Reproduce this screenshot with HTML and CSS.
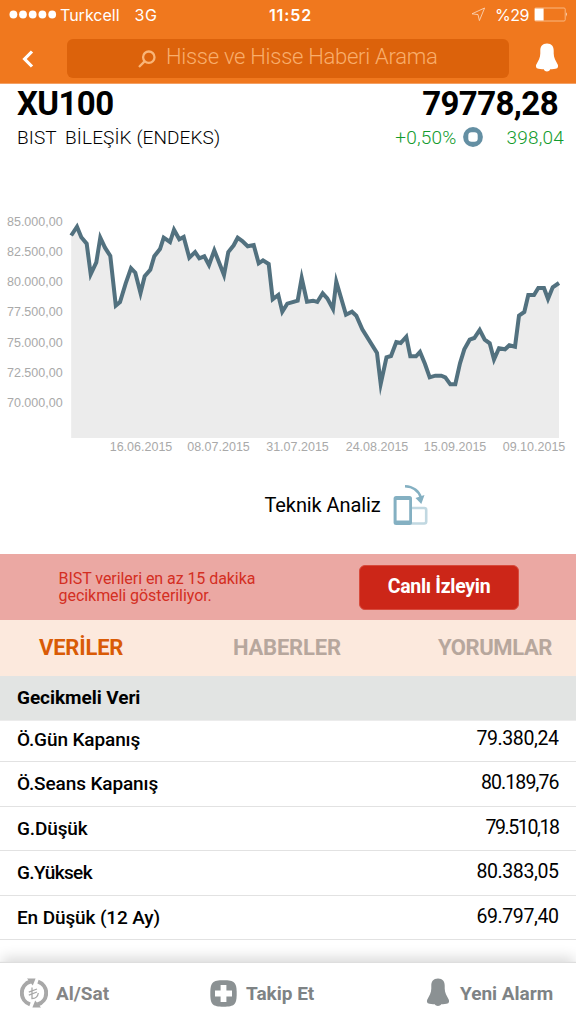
FILE: index.html
```html
<!DOCTYPE html>
<html lang="tr">
<head>
  <meta charset="UTF-8">
  <meta name="viewport" content="width=device-width, initial-scale=1.0">
  <title>XU100 - BIST Bileşik</title>
  <link rel="stylesheet" href="styles.css">
</head>
<body>
  <header class="top">
    <div class="status-bar">
      <div class="status-left">
        <svg width="48" height="9" viewBox="0 0 48 9" fill="#fff">
          <circle cx="4.4" cy="4.5" r="3.9"/><circle cx="14" cy="4.5" r="3.9"/><circle cx="23.7" cy="4.5" r="3.9"/><circle cx="33.4" cy="4.5" r="3.9"/><circle cx="43.2" cy="4.5" r="3.9"/>
        </svg>
        <span class="carrier">Turkcell</span>
        <span class="network">3G</span>
      </div>
      <span class="clock">11:52</span>
      <div class="status-right">
        <svg width="15" height="15" viewBox="0 0 15 15" fill="none" stroke="#fbd3b3" stroke-width="0.9">
          <path d="M13.6 1 L1 6.8 L7 7.6 L8.4 13.6 Z"/>
        </svg>
        <span class="percent">%29</span>
        <svg width="34" height="15" viewBox="0 0 34 15">
          <rect x="0.6" y="1" width="30.6" height="13" rx="1.2" fill="none" stroke="#f9b780"/>
          <rect x="1" y="1.5" width="8.6" height="12" fill="#fff"/>
          <path d="M32 5.3 Q33.8 7.5 32 9.7 Z" fill="#fff"/>
        </svg>
      </div>
    </div>
    <div class="nav">
      <svg class="back" width="12" height="18" viewBox="0 0 12 18" fill="none" stroke="#fff" stroke-width="3.2">
        <path d="M10 1.5 L2.6 9 L10 16.5"/>
      </svg>
      <div class="search">
        <svg width="18" height="18" viewBox="0 0 18 18" fill="none" stroke="#f9b578" stroke-width="2.3">
          <circle cx="10.8" cy="7.2" r="5.7"/>
          <path d="M6.6 11.4 L1 17"/>
        </svg>
        <span>Hisse ve Hisse Haberi Arama</span>
      </div>
      <svg class="bell" width="24" height="29" viewBox="0 0 24 29" fill="#fff">
        <path d="M12 0.5 C7.3 0.5 5.3 3.6 5.3 7.4 L5.3 10.5 C5.3 15 3.3 17.5 1.3 21.5 C0.6 23 1 24.6 1.8 25.2 C4 26 6.5 26.2 8.8 26.3 C9.8 29.2 14.2 29.2 15.2 26.3 C17.5 26.2 20 26 22.2 25.2 C23 24.6 23.4 23 22.7 21.5 C20.7 17.5 18.7 15 18.7 10.5 L18.7 7.4 C18.7 3.6 16.7 0.5 12 0.5 Z"/>
      </svg>
    </div>
  </header>

  <section class="quote">
    <div class="quote-main">
      <h1>XU100</h1>
      <span class="price">79778,28</span>
    </div>
    <div class="quote-sub">
      <span class="index-name"><span>BIST</span> <span>BİLEŞİK (ENDEKS)</span></span>
      <div class="change">
        <span>+0,50%</span>
        <svg width="20" height="20" viewBox="0 0 20 20">
          <circle cx="10" cy="10" r="9.9" fill="#648fa3"/>
          <rect x="5.3" y="5.3" width="9.4" height="9.4" rx="3.2" fill="#fff"/>
        </svg>
        <span class="diff">398,04</span>
      </div>
    </div>
  </section>

  <svg class="chart" width="576" height="255" viewBox="0 205 576 255">
    <path class="area" d="M71.2 438 V235 L77 226.7 81.3 237.3 86.7 243.7 90.7 274.3 96.3 262.3 100.3 237.7 105 247.7 110.3 256 115.3 306.5 120 302 125.7 283.3 131 268.3 135.3 272.7 140.5 293 144.7 276.3 150.3 269.7 154.3 256.3 160 249 163.7 237.7 170 242 174 229.7 179.3 239.3 183.7 237 189.3 257.7 195.1 252 199.3 258.3 204.3 256.3 209 265 214.3 250.3 224 275 228.3 252 233.7 245.3 237.7 237.7 242.3 241 247.7 246.3 253.7 245 258.7 263.3 263 260.3 268.7 264 272.7 299.3 278.3 295 282.3 311.7 287.3 303.7 297.7 300.7 301.7 278 307 301.7 313 300.7 317.3 302 322.7 293.3 327.3 298.3 333 309 336.3 281.7 346 314.7 352 311.7 356.3 315.7 362.3 329.3 377 353 380.7 386 386.5 357.3 391 356 396.3 342 400.7 343 406.3 336.7 410.3 356.3 416 356.3 420 352 425 364 429.7 377.3 435.3 375.7 441.3 375.7 445.3 377.3 450.3 384.3 455.3 384.3 460 363.3 464.3 349.3 469.7 339.7 474.3 338 479.7 330 484.7 339.7 489.7 343.3 494 361 499 348.3 505 349.3 509.3 345.3 515 346.7 519 315.7 524.3 312 528.3 295 534 295 538.3 288 544 288 548 299 552.7 287.3 559 283 V438 Z"/>
    <polyline class="line" points="71.2,235.5 77,226.7 81.3,237.3 86.7,243.7 90.7,274.3 96.3,262.3 100.3,237.7 105,247.7 110.3,256 115.8,305.5 120,302 125.7,283.3 131,268.3 135.3,272.7 140.5,293 144.7,276.3 150.3,269.7 154.3,256.3 160,249 163.7,237.7 170,242 174,229.7 179.3,239.3 183.7,237 189.3,257.7 195.1,252 199.3,258.3 204.3,256.3 209,265 214.3,250.3 224,275 228.3,252 233.7,245.3 237.7,237.7 242.3,241 247.7,246.3 253.7,245 258.7,263.3 263,260.3 268.7,264 272.7,299.3 278.3,295 282.3,311.7 287.3,303.7 297.7,300.7 301.7,278 307,301.7 313,300.7 317.3,302 322.7,293.3 327.3,298.3 333,309 336.3,281.7 346,314.7 352,311.7 356.3,315.7 362.3,329.3 377,353 380.7,384 386.5,357.3 391,356 396.3,342 400.7,343 406.3,336.7 410.3,356.3 416,356.3 420,352 425,364 429.7,377.3 435.3,375.7 441.3,375.7 445.3,377.3 450.3,384.3 455.3,384.3 460,363.3 464.3,349.3 469.7,339.7 474.3,338 479.7,330 484.7,339.7 489.7,343.3 494,359.5 499,348.3 505,349.3 509.3,345.3 515,346.7 519,315.7 524.3,312 528.3,295 534,295 538.3,288 544,288 548,299 552.7,287.3 559,283"/>
    <g class="axis axis-y">
      <text x="62.6" y="225.7">85.000,00</text>
      <text x="62.6" y="255.9">82.500,00</text>
      <text x="62.6" y="286.2">80.000,00</text>
      <text x="62.6" y="316.4">77.500,00</text>
      <text x="62.6" y="346.6">75.000,00</text>
      <text x="62.6" y="376.7">72.500,00</text>
      <text x="62.6" y="406.9">70.000,00</text>
    </g>
    <g class="axis axis-x">
      <text x="141" y="451.4">16.06.2015</text>
      <text x="218.5" y="451.4">08.07.2015</text>
      <text x="297.5" y="451.4">31.07.2015</text>
      <text x="377" y="451.4">24.08.2015</text>
      <text x="455" y="451.4">15.09.2015</text>
      <text x="534" y="451.4">09.10.2015</text>
    </g>
  </svg>

  <div class="analysis">
    <span>Teknik Analiz</span>
    <svg width="36" height="42" viewBox="0 0 36 42">
      <rect x="17" y="24" width="16.2" height="15.5" rx="2" fill="none" stroke="#c1d8e1" stroke-width="2.6"/>
      <rect x="0.6" y="12" width="18.4" height="29" rx="2.5" fill="#84b0c2"/>
      <rect x="3.6" y="16" width="12.6" height="20.5" fill="#fff"/>
      <path d="M12 2.2 C20 2.5 26 7 28 14" fill="none" stroke="#84b0c2" stroke-width="2.6"/>
      <path d="M22.5 14 L31.5 11 L28.3 20 Z" fill="#84b0c2"/>
    </svg>
  </div>

  <div class="notice">
    <p>BIST verileri en az 15 dakika<br>gecikmeli gösteriliyor.</p>
    <button class="live-btn">Canlı İzleyin</button>
  </div>

  <nav class="tabs">
    <span class="tab active">VERİLER</span>
    <span class="tab tab-news">HABERLER</span>
    <span class="tab tab-comments">YORUMLAR</span>
  </nav>

  <h2 class="section-title">Gecikmeli Veri</h2>
  <ul class="data">
    <li><span class="label">Ö.Gün Kapanış</span><span class="value">79.380,24</span></li>
    <li><span class="label">Ö.Seans Kapanış</span><span class="value ones">80.189,76</span></li>
    <li><span class="label">G.Düşük</span><span class="value more-ones">79.510,18</span></li>
    <li><span class="label tight">G.Yüksek</span><span class="value">80.383,05</span></li>
    <li><span class="label">En Düşük (12 Ay)</span><span class="value">69.797,40</span></li>
  </ul>

  <footer class="bottom-bar">
    <div class="action trade">
      <svg width="28" height="30" viewBox="0 0 28 30">
        <path d="M10 26.4 A12 12 0 0 1 10.5 3.5" fill="none" stroke="#a8a8a8" stroke-width="4"/>
        <path d="M18 3.6 A12 12 0 0 1 17.5 26.5" fill="none" stroke="#a8a8a8" stroke-width="4"/>
        <path d="M7 0.4 L15.6 0.6 L12.8 7.5 Z M21 29.6 L12.4 29.4 L15.2 22.5 Z" fill="#a8a8a8"/>
        <path d="M12 9.5 V20.5 Q17.6 20.5 18.3 15 M8.8 14.2 L17 11 M8.8 17.2 L17 14" fill="none" stroke="#a8a8a8" stroke-width="1.3"/>
      </svg>
      <span>Al/Sat</span>
    </div>
    <div class="action follow">
      <svg width="27" height="27" viewBox="0 0 27 27">
        <path d="M13.5 0.3 C24.5 0.3 26.7 2.5 26.7 13.5 S24.5 26.7 13.5 26.7 S0.3 24.5 0.3 13.5 S2.5 0.3 13.5 0.3 Z" fill="#8b9193"/>
        <path d="M10.6 5 H16.4 V10.6 H22 V16.4 H16.4 V22 H10.6 V16.4 H5 V10.6 H10.6 Z" fill="#fff"/>
      </svg>
      <span>Takip Et</span>
    </div>
    <div class="action alarm">
      <svg width="24" height="29" viewBox="0 0 24 29" fill="#8b9193">
        <path d="M12 0.5 C7.3 0.5 5.3 3.6 5.3 7.4 L5.3 10.5 C5.3 15 3.3 17.5 1.3 21.5 C0.6 23 1 24.6 1.8 25.2 C4 26 6.5 26.2 8.8 26.3 C9.8 28.5 14.2 28.5 15.2 26.3 C17.5 26.2 20 26 22.2 25.2 C23 24.6 23.4 23 22.7 21.5 C20.7 17.5 18.7 15 18.7 10.5 L18.7 7.4 C18.7 3.6 16.7 0.5 12 0.5 Z"/>
      </svg>
      <span>Yeni Alarm</span>
    </div>
  </footer>
</body>
</html>
```
FILE: styles.css
```css
* {
  box-sizing: border-box;
}

body {
  margin: 0;
  width: 576px;
  height: 1024px;
  display: flex;
  flex-direction: column;
  overflow: hidden;
  background-color: #fff;
  color: #000;
  font-family: Roboto, sans-serif;
}

svg {
  display: block;
  flex-shrink: 0;
}

.top {
  height: 84px;
  background-color: #f0781e;
  border-bottom: 1px solid #f4a063;
}

.status-bar {
  display: grid;
  grid-template-columns: 1fr auto 1fr;
  height: 29px;
  padding: 0 8px 0 9px;
  align-items: center;
  color: #fff;
  font-family: Inter, sans-serif;
  font-size: 16px;
}

.status-left,
.status-right {
  display: flex;
  align-items: center;
}

.status-right {
  justify-content: flex-end;
}

.carrier {
  margin-left: 3px;
}

.network {
  margin-left: 15px;
  letter-spacing: 0.5px;
}

.clock {
  margin-left: 4px;
  font-weight: 600;
  letter-spacing: 0.9px;
}

.percent {
  margin: 0 5px 0 9px;
  letter-spacing: -0.5px;
}

.nav {
  display: flex;
  align-items: center;
  height: 54px;
  padding: 0 16px 0 22px;
}

.back {
  margin-top: 6px;
}

.bell {
  margin-top: 3px;
}

.search {
  display: flex;
  align-items: center;
  width: 442px;
  height: 39px;
  margin: 5px 26px 0 33px;
  padding-left: 71px;
  border-radius: 6px;
  background-color: #dc620b;
  color: #f9ae6c;
  font-size: 22px;
  font-weight: 300;
  letter-spacing: -0.27px;
  line-height: 26px;
}

.search span {
  margin: -4px 0 0 10px;
}

.quote {
  height: 121px;
  padding: 0 18px 0 17px;
}

.quote-main,
.quote-sub {
  display: flex;
  justify-content: space-between;
}

.quote-main {
  height: 40px;
  font-size: 33px;
  font-weight: 700;
  line-height: 39px;
  letter-spacing: -0.6px;
}

h1 {
  margin: 0;
  font-size: inherit;
}

.quote-sub {
  height: 27px;
  align-items: center;
  margin-right: -6px;
  font-size: 19px;
  font-weight: 300;
}

.index-name {
  letter-spacing: 0.1px;
}

.index-name span + span {
  margin-left: 4px;
}

.change {
  display: flex;
  align-items: center;
  color: #129b2d;
  letter-spacing: 0.2px;
}

.change svg {
  margin: -2px 0 0 7px;
}

.diff {
  margin-left: 23px;
}

.area {
  fill: #ececec;
}

.line {
  fill: none;
  stroke: #52717f;
  stroke-width: 4;
  stroke-miterlimit: 10;
}

.axis {
  fill: #a9a9a9;
  font-family: "Liberation Sans", sans-serif;
  font-size: 12.5px;
}

.axis-y {
  text-anchor: end;
}

.axis-x {
  text-anchor: middle;
}

.analysis {
  display: flex;
  align-items: center;
  height: 94px;
  padding: 0 0 4px 264.5px;
  font-size: 20px;
  letter-spacing: -0.1px;
}

.analysis svg {
  margin: 0 0 0 12px;
}

.notice {
  display: flex;
  align-items: center;
  justify-content: space-between;
  height: 66px;
  padding: 0 57px 0 58.6px;
  background-color: #eba8a3;
}

.notice p {
  margin: 0;
  color: #d42e22;
  font-size: 16px;
  line-height: 17px;
  letter-spacing: -0.06px;
}

.live-btn {
  width: 160px;
  height: 45px;
  padding: 0 0 2px;
  border: 1px solid #d74a3c;
  border-radius: 6px;
  background-color: #cc2618;
  color: #fff;
  font: 700 19.5px Roboto, sans-serif;
  letter-spacing: -0.3px;
}

.tabs {
  display: flex;
  height: 56px;
  padding: 0 24px 0 39px;
  background-color: #fce9dd;
  color: #b7a79d;
  font-size: 22px;
  font-weight: 700;
  line-height: 55px;
  letter-spacing: -0.2px;
}

.tab.active {
  width: 194px;
  color: #d95b06;
}

.tab-comments {
  margin-left: auto;
  letter-spacing: -0.4px;
}

.section-title {
  height: 44px;
  margin: 0;
  padding-left: 17px;
  background-color: #e2e4e3;
  font-size: 19px;
  font-weight: 700;
  line-height: 44px;
  letter-spacing: -0.05px;
}

.data {
  flex: 1;
  margin: 0;
  padding: 0;
  list-style: none;
  border-top: 1px solid #ececec;
}

.data li {
  display: flex;
  justify-content: space-between;
  height: 44.6px;
  padding: 0 17.5px 0 17px;
  border-bottom: 1px solid #e2e2e2;
  font-size: 19px;
  line-height: 44px;
}

.data li:first-child {
  height: 41px;
  line-height: 37px;
}

.label {
  font-weight: 500;
  letter-spacing: -0.12px;
}

.tight {
  letter-spacing: -0.6px;
}

.value {
  margin-top: -1px;
  font-size: 19.5px;
  letter-spacing: -0.4px;
}

.ones {
  letter-spacing: -0.9px;
}

.more-ones {
  letter-spacing: -1.4px;
}

.bottom-bar {
  display: flex;
  height: 61px;
  padding-bottom: 1px;
  background-color: #fff;
  box-shadow: 0 -1px 1px #dedede, 0 -8px 12px -2px #dcdcdc;
  color: #7e8385;
  font-size: 19px;
  font-weight: 700;
}

.action {
  display: flex;
  align-items: center;
}

.trade {
  width: 210px;
  padding-left: 20px;
  gap: 8px;
  color: #858585;
}

.follow {
  width: 216px;
  gap: 9px;
}

.alarm {
  gap: 10px;
}

.alarm svg {
  margin-top: -1px;
}
```
